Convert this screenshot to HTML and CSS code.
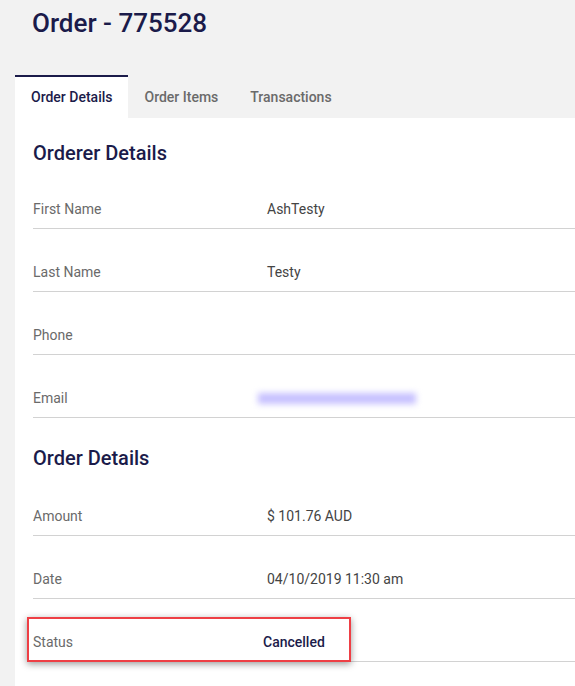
FILE: index.html
```html
<!DOCTYPE html>
<html lang="en">
<head>
<meta charset="utf-8">
<title>Order - 775528</title>
<link rel="stylesheet" href="styles.css">
</head>
<body>
<div class="page">
  <h1 class="title">Order - 775528</h1>
  <nav class="tabs">
    <div class="tab active">Order Details</div>
    <div class="tab">Order Items</div>
    <div class="tab">Transactions</div>
  </nav>
  <main class="panel">
    <section class="section first">
      <h2 class="section-title">Orderer Details</h2>
      <div class="row"><span class="label">First Name</span><span class="value">AshTesty</span></div>
      <div class="row"><span class="label">Last Name</span><span class="value">Testy</span></div>
      <div class="row"><span class="label">Phone</span><span class="value"></span></div>
      <div class="row"><span class="label">Email</span><span class="value"><span class="blurred" aria-label="email hidden"></span></span></div>
    </section>
    <section class="section second">
      <h2 class="section-title">Order Details</h2>
      <div class="row"><span class="label">Amount</span><span class="value">$ 101.76 AUD</span></div>
      <div class="row"><span class="label">Date</span><span class="value">04/10/2019 11:30 am</span></div>
      <div class="row status-row"><span class="label">Status</span><span class="value status">Cancelled</span><div class="highlight"></div></div>
    </section>
  </main>
</div>
</body>
</html>
```

FILE: styles.css
```css
html, body {
  margin: 0;
  padding: 0;
  background: #f2f2f2;
  font-family: Roboto, "Liberation Sans", Arial, sans-serif;
  overflow: hidden;
}

.page {
  padding-left: 15px;
}

.title {
  margin: 0;
  padding: 8px 0 0 17px;
  font-size: 26px;
  line-height: 30px;
  font-weight: 500;
  color: #1b1b4a;
}

.tabs {
  display: flex;
  margin-top: 37px;
}

.tab {
  padding: 0 16px;
  height: 41px;
  line-height: 41px;
  border-top: 2px solid transparent;
  font-size: 14px;
  font-weight: 500;
  color: #6a6a6a;
}

.tab.active {
  background: #fff;
  border-top-color: #1b1b4a;
  color: #1b1b4a;
}

.panel {
  background: #fff;
  padding: 23px 0 40px 18px;
}

.section + .section {
  margin-top: 28px;
}

.section-title {
  margin: 0;
  font-size: 20px;
  line-height: 24px;
  font-weight: 500;
  color: #1b1b4a;
}

.second .section-title {
  margin-bottom: 2px;
}

.row {
  position: relative;
  display: flex;
  align-items: center;
  height: 63px;
  padding-top: 23px;
  box-sizing: border-box;
  border-bottom: 1px solid #d2d2d2;
  font-size: 14px;
}

.section-title + .row {
  height: 64px;
  padding-top: 25px;
}

.label {
  width: 234px;
  color: #6a6a6a;
}

.value {
  color: #444;
}

.value.status {
  margin-left: -4px;
  color: #1b1b4a;
  font-weight: 500;
}

.blurred {
  display: inline-block;
  width: 158px;
  height: 11px;
  margin-left: -9px;
  background: #c6c0ff;
  filter: blur(3px);
  vertical-align: middle;
}

.highlight {
  position: absolute;
  left: -6px;
  top: 18px;
  width: 320px;
  height: 41px;
  border: 2px solid #ee3f45;
  box-shadow: 0 2px 7px rgba(0, 0, 0, 0.4);
  pointer-events: none;
}
```
